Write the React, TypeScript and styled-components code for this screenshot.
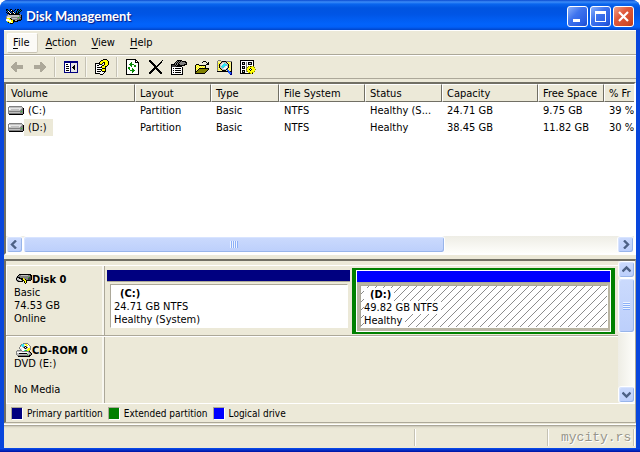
import React from 'react';
import styled, { createGlobalStyle, css } from 'styled-components';

const FACE = '#ece9d8';
const SHADE = '#aca899';
const DARK = '#716f64';

const GlobalStyle = createGlobalStyle`
  *, *::before, *::after { box-sizing: border-box; }
  html, body { margin: 0; padding: 0; }
  body {
    font-family: 'DejaVu Sans Condensed', 'Liberation Sans', sans-serif;
    font-size: 11px;
    line-height: 13px;
    color: #000;
    background: #fff;
  }
  button { font: inherit; color: inherit; margin: 0; padding: 0; border: 0; background: none; }
`;

/* ---------- pixel icons ---------- */

const PALETTE: Record<string, string> = {
  k: '#000000',
  w: '#ffffff',
  g: '#808080',
  l: '#c0c0c0',
  d: '#404040',
  e: '#e6e6e6',
  y: '#ffff00',
  p: '#fbf38c',
  o: '#808000',
  n: '#000080',
  b: '#2060ff',
  t: '#008080',
  c: '#30e0f0',
  f: '#ece9d8',
  v: '#0a8a0a',
  G: '#20d020',
  s: '#aca899',
};

const Bitmap = styled.svg`
  display: block;
  flex: none;
`;

function PixelIcon({ rows }: { rows: string[] }) {
  const width = Math.max(...rows.map((r) => r.length));
  const cells: React.ReactElement[] = [];
  rows.forEach((row, y) => {
    let x = 0;
    while (x < row.length) {
      const ch = row[x];
      let end = x + 1;
      while (end < row.length && row[end] === ch) end += 1;
      if (ch !== '.') {
        cells.push(<rect key={`${x}-${y}`} x={x} y={y} width={end - x} height={1} fill={PALETTE[ch]} />);
      }
      x = end;
    }
  });
  return (
    <Bitmap width={width} height={rows.length} viewBox={`0 0 ${width} ${rows.length}`} shapeRendering="crispEdges" aria-hidden="true">
      {cells}
    </Bitmap>
  );
}

const appIcon = [
  'kk..kk...k.kk.k.',
  'ktk.kwk.k..ktktk',
  '.kwk.kkk..k.ktk.',
  'k.kwk.kwk.ktkk..',
  '.kkkwkkkwkkkk...',
  '..gkkkkkkkkkkkg.',
  '.glllllllllllggk',
  'gllllllllllllggk',
  'geeeegggggggGgdk',
  'gyyykglllllggggk',
  'wwwyykgggggggddk',
  'wwwwwyykkllkkkk.',
  '.yywwyykkkkk....',
  '..kyywyk........',
  '....kkk.........',
];

const backIcon = [
  '....ss......',
  '...sss......',
  '..ssss......',
  '.sssssssssss',
  'ssssssssssss',
  'ssssssssssss',
  '.sssssssssss',
  '..ssss......',
  '...sss......',
  '....ss......',
];
const forwardIcon = backIcon.map((r) => r.split('').reverse().join(''));

const treeIcon = [
  'nnnnnnnnnnnnnn',
  'nnnnnnnnnnnnnn',
  'nwwwwwneeeeeen',
  'nwkkwwneeeeeen',
  'nwwwwwneeekeen',
  'nwkkkwneekkeen',
  'nwwwwwnekkkeen',
  'nwkkkwneekkeen',
  'nwwwwwneeekeen',
  'nwkkkwneeeeeen',
  'nwwwwwneeeeeen',
  'nnnnnnnnnnnnnn',
];

const helpIcon = [
  '........kkkk..',
  '......kkyyyyk.',
  '.....kyyyyyyyk',
  '....kyyykkyyyk',
  'kkkkkyyk.kyyyk',
  'kwwwkkk..kyyyk',
  'kwkkwwwkkyyyk.',
  'kwwwwwkyyykk..',
  'kwkkkkkyyyk...',
  'kwwwwwwkkkk...',
  'kwkkkkkyyyk...',
  'kwwwwwkyyyk...',
  'kwkkkkwkkkk...',
  'kwwwwwwwwk....',
  'kkkkkwwwk.....',
  '.....kkk......',
];

const refreshIcon = [
  'kkkkkkkkkk...',
  'kwwwwwwwwkk..',
  'kwwwwwwwwkwk.',
  'kwwwwvwwwkkkk',
  'kwwwvvwwwwwwk',
  'kwwvvvvvwwwwk',
  'kwwwvvwwvvwwk',
  'kwwwwvwwvvwwk',
  'kwvvwwwwwwwwk',
  'kwvvwwvwwwwwk',
  'kwwvwwvvwwwwk',
  'kwwwvvvvvwwwk',
  'kwwwwwvvwwwwk',
  'kwwwwwvwwwwwk',
  'kwwwwwwwwwwwk',
  'kkkkkkkkkkkkk',
];

const deleteIcon = [
  'kk...........k',
  'kkk.........k.',
  '.kkk.......kk.',
  '..kkk.....kk..',
  '...kkk...kk...',
  '....kkk.kk....',
  '.....kkkk.....',
  '.....kkk......',
  '....kkkkk.....',
  '...kkk.kkk....',
  '..kkk...kkk...',
  '.kkk.....kkk..',
  'kkk.......kkk.',
  'kk.........kk.',
];

const propertiesIcon = [
  '......kkkkk.....',
  '.....kgkgkgkkkk.',
  '....kgkgkgggggkk',
  '...kgkgkgggggggk',
  'kkkkgkgkkggggkkk',
  'kdddkgkkkkkkkk..',
  'kddddkkkkkk.....',
  'kwwwwwwwwwwk....',
  'kwkwkkkkkkwk....',
  'kwwwwwwwwwwk....',
  'kwkwkkkkkkwk....',
  'kwwwwwwwwwwk....',
  'kwkwkkkkkkwk....',
  'kwwwwwwwwwwk....',
  'kkkkkkkkkkkk....',
];

const folderIcon = [
  '.........kkk...',
  '........k...k.k',
  '.............kk',
  '..kkk.......kkk',
  '.kypykkkkkkk...',
  '.kpypypypypk...',
  '.kypypypypyk...',
  '.kpypkkkkkkkkkk',
  '.kypkoooooooook',
  '.kpkoooooooook.',
  '.kkoooooooook..',
  '.koooooooook...',
  '.kkkkkkkkkk....',
];

const findIcon = [
  '.ggg...........',
  'gpppgkkkkgggggg',
  'gpppkllllkpyppk',
  'gyykleecllkpypk',
  'gpkleecccclkppk',
  'gykleccccclkypk',
  'gpklccccewlkppk',
  'gykllcceewlkypk',
  'gppkllewwlkpppk',
  'gypykllllkbpypk',
  'gppppkkkkpbbppk',
  'kkkkkkkkkkkbbkk',
  '...........bbbn',
  '............bbn',
  '.............nn',
];

const settingsIcon = [
  'kkkkkkkkkkkkkk..',
  'kwwwwwwwwwwwwk..',
  'kwkkkwgwkkkkwk..',
  'kwklkwgwkllkwk..',
  'kwkkkwgwkkkkwk..',
  'kwwwwwgwwwwwwk..',
  'kwkkkwgwoykoyo..',
  'kwklkwgoyyyyyyo.',
  'kwkkkwgyyykyyyy.',
  'kwwwwwoyykwkyyyo',
  'kwkkkwgyyykyyyy.',
  'kwklkwgoyyyyyyo.',
  'kwkkkwwwyoyyoy..',
  'kkkkkkkkkkoyk...',
];

const driveIcon = [
  '.ggggggggggggg..',
  'glllllllllllllg.',
  'gweeeeeeeeeeelgk',
  'gwellllllllelggk',
  'glllllllllllgggk',
  'gggggggggggggGgk',
  'glllllllllllgggk',
  'gggggggggggggggk',
  '.kkkkkkkkkkkkkk.',
];

const diskIcon = [
  '...kkkkkkkkkkkk.',
  '..kgglllllllggkk',
  '.kggggggggggggdk',
  'gkkkggggggggGddk',
  'kllkkkkyggggdddk',
  'kllelkkyykggdddk',
  'gkglelkkyykkkkk.',
  '.gkkkkk.kyk.....',
  '........kyk.....',
  '.........k......',
];

const cdIcon = [
  '.......ggggg....',
  '.....gcceyywg...',
  '....gcccewyywg..',
  '....geccgkgwweg.',
  '...gwwegkwkgweg.',
  '...geewwgkgeyyg.',
  '....gewwweeyyyg.',
  '.gggggwwcGGyyg..',
  'glllllgggggggk..',
  'gwwwwwwwwwwwlgk.',
  'gllkkkkkkkklllgk',
  'gllllllllllGlggk',
  '.ggggggggggggkk.',
  '..kkkkkkkkkkkk..',
];

/* ---------- window frame ---------- */

const Frame = styled.div`
  display: flex;
  flex-direction: column;
  height: 100vh;
  border-radius: 8px 8px 0 0;
  background: #0846dc;
  overflow: hidden;
`;

const TitleBar = styled.header`
  display: flex;
  align-items: center;
  flex: none;
  height: 30px;
  padding: 2px 6px 0 6px;
  gap: 2px;
  background: linear-gradient(
    to bottom,
    #0a4ad0 0px,
    #3c8cf8 2px,
    #0a66ee 4px,
    #0054e0 8px,
    #0055e5 14px,
    #0263fb 24px,
    #0260f8 27px,
    #0144c8 30px
  );
`;

const Title = styled.h1`
  flex: 1;
  margin: 0;
  padding-left: 2px;
  color: #fff;
  font-family: Lato, 'Open Sans', sans-serif;
  font-size: 13px;
  font-weight: 700;
  line-height: 18px;
  text-shadow: 1px 1px 1px #0a1883;
`;

const CaptionButton = styled.button<{ $close?: boolean }>`
  display: grid;
  place-items: center;
  width: 21px;
  height: 21px;
  border: 1px solid #fff;
  border-radius: 3px;
  background: ${(p) =>
    p.$close
      ? 'linear-gradient(135deg, #f0a088 0, #e0593c 40%, #d04a28 80%, #b83a18 100%)'
      : 'linear-gradient(135deg, #8ab0fa 0, #3f74ee 40%, #2a5ee4 80%, #1c48c8 100%)'};
`;

const Client = styled.main`
  display: flex;
  flex-direction: column;
  flex: 1;
  min-height: 0;
  margin: 0 4px;
  background: ${FACE};
`;

const FrameFoot = styled.div`
  flex: none;
  height: 4px;
  background: linear-gradient(to bottom, #0a50f0, #0010a0);
`;

const barEdges = css`
  border-top: 1px solid #fff;
  border-bottom: 1px solid ${SHADE};
`;

const MenuBar = styled.nav`
  ${barEdges}
  display: flex;
  align-items: center;
  flex: none;
  height: 25px;
  padding-left: 3px;
`;

const MenuItem = styled.button<{ $hot?: boolean }>`
  height: 20px;
  padding: 0 6px 0 7px;
  border: 1px solid transparent;
  border-radius: 2px;
  ${(p) =>
    p.$hot &&
    css`
      padding: 0 7px 0 5px;
      background: #fbfaf6;
      border-color: #fff #d4d0c0 #c8c4b4 #fff;
    `}
`;

const Mnemonic = styled.u`
  text-underline-offset: 2px;
`;

const ToolBar = styled.div`
  ${barEdges}
  display: flex;
  align-items: center;
  flex: none;
  height: 24px;
  padding-left: 1px;
`;

const ToolButton = styled.button`
  display: grid;
  place-items: center;
  width: 23px;
  height: 22px;
`;

const ToolDivider = styled.span`
  width: 2px;
  height: 20px;
  margin: 0 3px;
  border-left: 1px solid #c5c2b4;
  border-right: 1px solid #f8f7f0;
`;

/* ---------- volume list ---------- */

const sunken = css`
  border: 2px solid;
  border-color: ${DARK} #fff #fff ${DARK};
`;

const ListPane = styled.section`
  ${sunken}
  display: flex;
  flex-direction: column;
  flex: 1;
  min-height: 0;
  margin-top: 3px;
  background: #fff;
`;

const ListView = styled.div`
  flex: 1;
  min-height: 0;
  overflow: hidden;
`;

const VolumeTable = styled.table`
  width: 100%;
  table-layout: fixed;
  border-collapse: separate;
  border-spacing: 0;
`;

const HeadCell = styled.th<{ $width?: number }>`
  width: ${(p) => (p.$width ? `${p.$width}px` : 'auto')};
  height: 18px;
  padding: 1px 0 0 4px;
  background: ${FACE};
  border: 1px solid;
  border-color: #fff ${DARK} ${DARK} #fff;
  font-weight: 400;
  text-align: left;
  white-space: nowrap;
  overflow: hidden;
  &:last-child {
    border-right: 0;
  }
`;

const Cell = styled.td`
  height: 17px;
  padding: 0 0 0 5px;
  white-space: nowrap;
  overflow: hidden;
`;

const VolumeCell = styled(Cell)`
  padding-left: 2px;
`;

const VolumeName = styled.span`
  display: flex;
  align-items: center;
`;

const VolumeLabel = styled.span<{ $selected: boolean }>`
  padding: 2px 6px 2px 4px;
  background: ${(p) => (p.$selected ? FACE : 'transparent')};
`;

/* ---------- scroll bars ---------- */

const ScrollTrack = styled.div<{ $vertical?: boolean }>`
  display: flex;
  flex: none;
  flex-direction: ${(p) => (p.$vertical ? 'column' : 'row')};
  ${(p) =>
    p.$vertical
      ? 'width: 17px; background: linear-gradient(to right, #eeede5, #fefefb);'
      : 'height: 17px; background: linear-gradient(to bottom, #eeede5, #fefefb);'}
`;

const blueFace = css`
  border: 1px solid #fff;
  border-radius: 3px;
  background: linear-gradient(to bottom, #cbdafd, #bccffb);
  box-shadow: inset -1px -1px 0 #98b5ea, inset 1px 1px 0 #d8e4ff;
`;

const ScrollButton = styled.button`
  ${blueFace}
  display: grid;
  place-items: center;
  flex: none;
  width: 17px;
  height: 17px;
`;

const ScrollThumb = styled.div<{ $vertical?: boolean; $share: number }>`
  ${blueFace}
  display: grid;
  place-items: center;
  flex: ${(p) => p.$share} 1 0;
`;

const ScrollRest = styled.div<{ $share: number }>`
  flex: ${(p) => p.$share} 1 0;
`;

const Grip = styled.span<{ $vertical?: boolean }>`
  ${(p) => (p.$vertical ? 'width: 7px; height: 8px;' : 'width: 8px; height: 7px;')}
  background: repeating-linear-gradient(
    ${(p) => (p.$vertical ? 'to bottom' : 'to right')},
    #eef4fe 0 1px,
    #8cb0f8 1px 2px
  );
`;

const ARROWS = {
  left: 'M6 0.5 L2 4.5 L6 8.5',
  right: 'M3 0.5 L7 4.5 L3 8.5',
  up: 'M0.5 6.5 L4.5 2.5 L8.5 6.5',
  down: 'M0.5 2.5 L4.5 6.5 L8.5 2.5',
};

function Arrow({ dir }: { dir: keyof typeof ARROWS }) {
  return (
    <Bitmap width="9" height="9" viewBox="0 0 9 9" aria-hidden="true">
      <path d={ARROWS[dir]} fill="none" stroke="#4d6185" strokeWidth="2.4" />
    </Bitmap>
  );
}

/* ---------- disk view ---------- */

const DiskPane = styled.section`
  ${sunken}
  flex: none;
  margin-top: 4px;
  border-color: ${DARK} ${SHADE} ${SHADE} ${DARK};
  border-right-width: 1px;
  border-bottom-width: 1px;
`;

const DiskArea = styled.div`
  display: flex;
`;

const DiskList = styled.ul`
  flex: 1;
  min-width: 0;
  margin: 0;
  padding: 4px 0 0;
  list-style: none;
`;

const DiskRow = styled.li`
  display: flex;
  height: 71px;
  border-top: 1px solid #fff;
  border-bottom: 1px solid ${SHADE};
  &:last-child {
    height: 67px;
    border-bottom: 0;
  }
`;

const DiskLabel = styled.div`
  width: 99px;
  flex: none;
  padding: 6px 0 0 7px;
  border-left: 1px solid #fff;
  border-right: 1px solid ${SHADE};
  box-shadow: inset -2px 0 0 #f8f7f0;
`;

const DiskName = styled.strong`
  display: flex;
  align-items: center;
  height: 14px;
  padding-left: 2px;
`;

const Line = styled.div`
  min-height: 13px;
  white-space: nowrap;
`;

const Partitions = styled.div`
  display: flex;
  flex: 1;
  min-width: 0;
  padding: 2px 3px 1px 2px;
`;

const Region = styled.div<{ $share: number }>`
  display: flex;
  flex-direction: column;
  flex: ${(p) => p.$share} 1 0;
  min-width: 0;
  padding: 2px 2px 3px 0;
`;

const ExtendedRegion = styled(Region)`
  padding: 0;
  border: solid #008000;
  border-width: 2px 4px;
`;

const ExtendedInner = styled.div`
  display: flex;
  flex-direction: column;
  flex: 1;
  border: 1px solid #fff;
  background: #b9b5a2;
`;

const Stripe = styled.div<{ $color: string }>`
  flex: none;
  height: 12px;
  border-bottom: 1px solid ${SHADE};
  background: ${(p) => p.$color};
`;

const hatchTile = encodeURIComponent(
  '<svg xmlns="http://www.w3.org/2000/svg" width="8" height="8" shape-rendering="crispEdges"><path fill="#8c8c8c" d="M7 0h1v1H7zM6 1h1v1H6zM5 2h1v1H5zM4 3h1v1H4zM3 4h1v1H3zM2 5h1v1H2zM1 6h1v1H1zM0 7h1v1H0z"/></svg>',
);

const RegionBody = styled.div<{ $hatched?: boolean }>`
  flex: 1;
  margin: 2px 2px 3px 3px;
  padding: 2px 0 0 3px;
  border: 1px solid;
  border-color: ${SHADE} #fff #fff ${SHADE};
  background: #fff ${(p) => p.$hatched && `url("data:image/svg+xml,${hatchTile}")`};
`;

const RegionText = styled.span<{ $strong?: boolean }>`
  display: inline-block;
  vertical-align: top;
  background: #fff;
  padding-right: 3px;
  ${(p) => p.$strong && 'padding-left: 6px; font-weight: 700;'}
`;

const Legend = styled.div`
  display: flex;
  align-items: center;
  height: 19px;
  padding-left: 5px;
  gap: 5px;
  border-top: 1px solid #fff;
  font-size: 10px;
`;

const LegendItem = styled.span`
  display: flex;
  align-items: center;
  gap: 4px;
`;

const Swatch = styled.span<{ $color: string }>`
  width: 12px;
  height: 13px;
  border: 1px solid;
  border-color: ${SHADE} #fff #fff ${SHADE};
  background: ${(p) => p.$color};
`;

/* ---------- status bar ---------- */

const StatusBar = styled.footer`
  display: flex;
  flex: none;
  height: 24px;
  margin-top: 1px;
  padding: 4px 2px 1px 0;
  border-top: 1px solid #fff;
  box-shadow: inset 0 1px 0 ${SHADE}, inset 0 3px 2px -1px #c8c5b6;
`;

const StatusCell = styled.div<{ $width?: number }>`
  flex: ${(p) => (p.$width ? `0 0 ${p.$width}px` : '1')};
  height: 17px;
  border-right: 1px solid #c5c2b4;
  box-shadow: 1px 0 0 #fff;
  overflow: hidden;
`;

const Mark = styled.span`
  display: block;
  padding-left: 13px;
  color: #97958a;
  font-family: 'Liberation Mono', monospace;
  font-size: 13px;
  line-height: 17px;
  text-shadow: 1px 1px 0 #fff;
`;

/* ---------- data ---------- */

const columns: { name: string; width?: number }[] = [
  { name: 'Volume', width: 129 },
  { name: 'Layout', width: 76 },
  { name: 'Type', width: 68 },
  { name: 'File System', width: 86 },
  { name: 'Status', width: 77 },
  { name: 'Capacity', width: 96 },
  { name: 'Free Space', width: 66 },
  { name: '% Fr' },
];

const volumes = [
  { name: '(C:)', selected: false, cells: ['Partition', 'Basic', 'NTFS', 'Healthy (S...', '24.71 GB', '9.75 GB', '39 %'] },
  { name: '(D:)', selected: true, cells: ['Partition', 'Basic', 'NTFS', 'Healthy', '38.45 GB', '11.82 GB', '30 %'] },
];

const menus = ['File', 'Action', 'View', 'Help'];

const toolGroups = [
  [
    { label: 'Back', icon: backIcon },
    { label: 'Forward', icon: forwardIcon },
  ],
  [{ label: 'Show/Hide Console Tree', icon: treeIcon }],
  [{ label: 'Help', icon: helpIcon }],
  [
    { label: 'Refresh', icon: refreshIcon },
    { label: 'Delete', icon: deleteIcon },
    { label: 'Properties', icon: propertiesIcon },
    { label: 'Open', icon: folderIcon },
    { label: 'Explore', icon: findIcon },
    { label: 'Settings', icon: settingsIcon },
  ],
];

const legend = [
  { name: 'Primary partition', color: '#000080' },
  { name: 'Extended partition', color: '#008000' },
  { name: 'Logical drive', color: '#0000ff' },
];

export default function App() {
  return (
    <>
      <GlobalStyle />
      <Frame>
        <TitleBar>
          <PixelIcon rows={appIcon} />
          <Title>Disk Management</Title>
          <CaptionButton aria-label="Minimize">
            <Bitmap width="13" height="13" viewBox="0 0 13 13"><path d="M2 9h7v3H2z" fill="#fff" /></Bitmap>
          </CaptionButton>
          <CaptionButton aria-label="Maximize">
            <Bitmap width="13" height="13" viewBox="0 0 13 13">
              <path d="M1 1h11v11H1z M2 4v7h9V4z" fill="#fff" fillRule="evenodd" />
            </Bitmap>
          </CaptionButton>
          <CaptionButton $close aria-label="Close">
            <Bitmap width="13" height="13" viewBox="0 0 13 13">
              <path d="M2 2l9 9M11 2l-9 9" stroke="#fff" strokeWidth="2.2" />
            </Bitmap>
          </CaptionButton>
        </TitleBar>
        <Client>
          <MenuBar>
            {menus.map((m, i) => (
              <MenuItem key={m} $hot={i === 0}>
                <Mnemonic>{m[0]}</Mnemonic>
                {m.slice(1)}
              </MenuItem>
            ))}
          </MenuBar>
          <ToolBar>
            {toolGroups.map((group, i) => (
              <React.Fragment key={i}>
                {i > 0 && <ToolDivider />}
                {group.map((t) => (
                  <ToolButton key={t.label} aria-label={t.label}>
                    <PixelIcon rows={t.icon} />
                  </ToolButton>
                ))}
              </React.Fragment>
            ))}
          </ToolBar>
          <ListPane>
            <ListView>
              <VolumeTable>
                <thead>
                  <tr>
                    {columns.map((c) => (
                      <HeadCell key={c.name} $width={c.width}>{c.name}</HeadCell>
                    ))}
                  </tr>
                </thead>
                <tbody>
                  {volumes.map((v) => (
                    <tr key={v.name}>
                      <VolumeCell>
                        <VolumeName>
                          <PixelIcon rows={driveIcon} />
                          <VolumeLabel $selected={v.selected}>{v.name}</VolumeLabel>
                        </VolumeName>
                      </VolumeCell>
                      {v.cells.map((c, i) => (
                        <Cell key={i}>{c}</Cell>
                      ))}
                    </tr>
                  ))}
                </tbody>
              </VolumeTable>
            </ListView>
            <ScrollTrack>
              <ScrollButton aria-label="Scroll left"><Arrow dir="left" /></ScrollButton>
              <ScrollThumb $share={421}><Grip /></ScrollThumb>
              <ScrollRest $share={172} />
              <ScrollButton aria-label="Scroll right"><Arrow dir="right" /></ScrollButton>
            </ScrollTrack>
          </ListPane>
          <DiskPane>
            <DiskArea>
              <DiskList>
                <DiskRow>
                  <DiskLabel>
                    <DiskName><PixelIcon rows={diskIcon} />Disk 0</DiskName>
                    <Line>Basic</Line>
                    <Line>74.53 GB</Line>
                    <Line>Online</Line>
                  </DiskLabel>
                  <Partitions>
                    <Region $share={243}>
                      <Stripe $color="#000080" />
                      <RegionBody>
                        <Line><RegionText $strong>(C:)</RegionText></Line>
                        <Line><RegionText>24.71 GB NTFS</RegionText></Line>
                        <Line><RegionText>Healthy (System)</RegionText></Line>
                      </RegionBody>
                    </Region>
                    <ExtendedRegion $share={255}>
                      <ExtendedInner>
                        <Stripe $color="#0000ff" />
                        <RegionBody $hatched>
                          <Line><RegionText $strong>(D:)</RegionText></Line>
                          <Line><RegionText>49.82 GB NTFS</RegionText></Line>
                          <Line><RegionText>Healthy</RegionText></Line>
                        </RegionBody>
                      </ExtendedInner>
                    </ExtendedRegion>
                  </Partitions>
                </DiskRow>
                <DiskRow>
                  <DiskLabel>
                    <DiskName><PixelIcon rows={cdIcon} />CD-ROM 0</DiskName>
                    <Line>DVD (E:)</Line>
                    <Line />
                    <Line>No Media</Line>
                  </DiskLabel>
                </DiskRow>
              </DiskList>
              <ScrollTrack $vertical>
                <ScrollButton aria-label="Scroll up"><Arrow dir="up" /></ScrollButton>
                <ScrollThumb $vertical $share={54}><Grip $vertical /></ScrollThumb>
                <ScrollRest $share={54} />
                <ScrollButton aria-label="Scroll down"><Arrow dir="down" /></ScrollButton>
              </ScrollTrack>
            </DiskArea>
            <Legend>
              {legend.map((l) => (
                <LegendItem key={l.name}><Swatch $color={l.color} />{l.name}</LegendItem>
              ))}
            </Legend>
          </DiskPane>
          <StatusBar>
            <StatusCell />
            <StatusCell $width={133} />
            <StatusCell $width={86}><Mark>mycity.rs</Mark></StatusCell>
          </StatusBar>
        </Client>
        <FrameFoot />
      </Frame>
    </>
  );
}
